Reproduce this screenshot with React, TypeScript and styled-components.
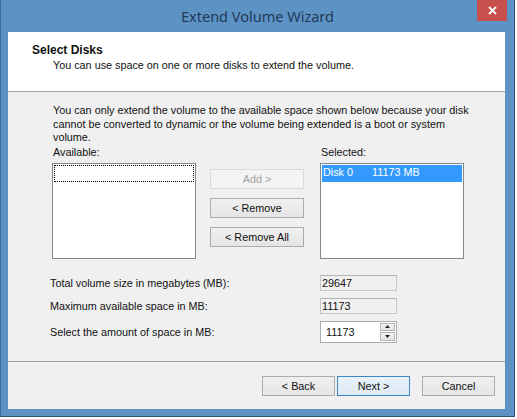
import React from "react";
import styled, { createGlobalStyle } from "styled-components";

const Global = createGlobalStyle`
  html, body { margin: 0; padding: 0; background: #ffffff; }
  body { font-family: "Liberation Sans", Arial, sans-serif; font-size: 10.8px; color: #111; }
  * { box-sizing: border-box; }
`;

const Window = styled.div`
  width: 515px;
  height: 417px;
  background: #5d92c5;
  border-left: 1px solid #3d6a93;
  border-right: 1px solid #2d4f70;
  border-bottom: 1px solid #2d4f70;
  padding: 0 9px 7px 7px;
  display: flex;
  flex-direction: column;
`;

const TitleBar = styled.div`
  height: 32px;
  display: grid;
  grid-template-columns: 1fr auto 1fr;
  margin-right: -2px;
`;

const Title = styled.div`
  grid-column: 2;
  font-family: "Segoe UI", "Noto Sans", "Open Sans", sans-serif;
  font-size: 14.5px;
  color: #1f3a57;
  line-height: 32px;
`;

const CloseBtn = styled.div`
  grid-column: 3;
  justify-self: end;
  width: 30px;
  height: 21px;
  background: #c7504c;
  display: flex;
  align-items: center;
  justify-content: center;
`;

const Client = styled.div`
  flex: 1;
  display: flex;
  flex-direction: column;
  background: #f0f0f0;
`;

const Header = styled.div`
  height: 60px;
  background: #ffffff;
  border-bottom: 1px solid #a0a0a0;
  padding: 11px 0 0 24px;
`;

const HeaderTitle = styled.div`
  font-weight: bold;
  font-size: 12px;
  line-height: 15px;
`;

const HeaderSub = styled.div`
  padding-left: 21px;
  line-height: 15px;
`;

const Body = styled.div`
  flex: 1;
  padding: 12px 0 0 42px;
  display: flex;
  flex-direction: column;
  border-bottom: 1px solid #a0a0a0;
`;

const Paragraph = styled.div`
  padding-left: 3px;
  line-height: 13.5px;
`;

const ListsRow = styled.div`
  display: flex;
  padding-left: 2px;
`;

const Column = styled.div<{ $w: number; $ml?: number }>`
  width: ${(p) => p.$w}px;
  margin-left: ${(p) => p.$ml ?? 0}px;
  display: flex;
  flex-direction: column;
`;

const ListLabel = styled.div`
  line-height: 14px;
  margin-bottom: 4px;
  padding-left: 1px;
`;

const ListBox = styled.div`
  height: 96px;
  background: #ffffff;
  border: 1px solid #828790;
  padding: 1px;
`;

const FocusRow = styled.div`
  height: 17px;
  border: 1px dotted #000;
`;

const SelRow = styled.div`
  height: 17px;
  background: #3399ff;
  color: #fff;
  display: flex;
  line-height: 15px;
  padding-left: 1px;
`;

const SelCell = styled.span<{ $w?: number }>`
  width: ${(p) => (p.$w ? `${p.$w}px` : "auto")};
`;

const ButtonStack = styled.div`
  display: flex;
  flex-direction: column;
  gap: 9px;
  padding-top: 24px;
`;

const Button = styled.div<{ $disabled?: boolean; $default?: boolean; $w?: number; $ml?: number }>`
  height: 20px;
  width: ${(p) => (p.$w ? `${p.$w}px` : "auto")};
  margin-left: ${(p) => p.$ml ?? 0}px;
  display: flex;
  align-items: center;
  justify-content: center;
  border: 1px solid ${(p) => (p.$disabled ? "#d9d9d9" : p.$default ? "#3c86c9" : "#acacac")};
  background: ${(p) =>
    p.$disabled ? "#f4f4f4" : p.$default ? "linear-gradient(#eaf2fa, #dde9f5)" : "linear-gradient(#f0f0f0, #e5e5e5)"};
  color: ${(p) => (p.$disabled ? "#a3a3a3" : "#111")};
`;

const Fields = styled.div`
  display: grid;
  grid-template-columns: 270px 77px;
  grid-template-rows: 16px 16px 22px;
  row-gap: 7px;
  align-items: center;
  margin-top: 16px;
`;

const FieldLabel = styled.div`
  line-height: 14px;
`;

const ReadOnlyBox = styled.div`
  height: 16px;
  background: #f0f0f0;
  border: 1px solid #c8c8c8;
  border-top-color: #b4b4b4;
  line-height: 14px;
  padding-left: 1px;
`;

const Spinner = styled.div`
  height: 22px;
  background: #fff;
  border: 1px solid #abadb3;
  display: flex;
  align-items: stretch;
  padding: 1px 1px 1px 5px;
`;

const SpinValue = styled.div`
  flex: 1;
  line-height: 18px;
`;

const SpinButtons = styled.div`
  width: 15px;
  display: flex;
  flex-direction: column;
  gap: 1px;
`;

const SpinBtn = styled.div`
  flex: 1;
  border: 1px solid #b5b5b5;
  background: linear-gradient(#f3f3f3, #e3e3e3);
  display: flex;
  align-items: center;
  justify-content: center;
`;

const Footer = styled.div`
  height: 47px;
  display: flex;
  justify-content: flex-end;
  align-items: flex-start;
  padding: 14px 10px 0 0;
`;

const Arrow = ({ down }: { down?: boolean }) => (
  <svg width="5" height="3" viewBox="0 0 5 3">
    <polygon points={down ? "0,0 5,0 2.5,3" : "0,3 5,3 2.5,0"} fill="#222" />
  </svg>
);

export default function App() {
  return (
    <>
      <Global />
      <Window>
        <TitleBar>
          <Title>Extend Volume Wizard</Title>
          <CloseBtn>
            <svg width="9" height="9" viewBox="0 0 9 9">
              <path d="M1 1 L8 8 M8 1 L1 8" stroke="#fff" strokeWidth="1.8" />
            </svg>
          </CloseBtn>
        </TitleBar>
        <Client>
          <Header>
            <HeaderTitle>Select Disks</HeaderTitle>
            <HeaderSub>You can use space on one or more disks to extend the volume.</HeaderSub>
          </Header>
          <Body>
            <Paragraph>
              You can only extend the volume to the available space shown below because your disk
              <br />
              cannot be converted to dynamic or the volume being extended is a boot or system
              <br />
              volume.
            </Paragraph>
            <ListsRow>
              <Column $w={144}>
                <ListLabel>Available:</ListLabel>
                <ListBox>
                  <FocusRow />
                </ListBox>
              </Column>
              <Column $w={94} $ml={14}>
                <ButtonStack>
                  <Button $disabled>Add &gt;</Button>
                  <Button>&lt; Remove</Button>
                  <Button>&lt; Remove All</Button>
                </ButtonStack>
              </Column>
              <Column $w={144} $ml={16}>
                <ListLabel>Selected:</ListLabel>
                <ListBox>
                  <SelRow>
                    <SelCell $w={49}>Disk 0</SelCell>
                    <SelCell>11173 MB</SelCell>
                  </SelRow>
                </ListBox>
              </Column>
            </ListsRow>
            <Fields>
              <FieldLabel>Total volume size in megabytes (MB):</FieldLabel>
              <ReadOnlyBox>29647</ReadOnlyBox>
              <FieldLabel>Maximum available space in MB:</FieldLabel>
              <ReadOnlyBox>11173</ReadOnlyBox>
              <FieldLabel>Select the amount of space in MB:</FieldLabel>
              <Spinner>
                <SpinValue>11173</SpinValue>
                <SpinButtons>
                  <SpinBtn>
                    <Arrow />
                  </SpinBtn>
                  <SpinBtn>
                    <Arrow down />
                  </SpinBtn>
                </SpinButtons>
              </Spinner>
            </Fields>
          </Body>
          <Footer>
            <Button $w={73}>&lt; Back</Button>
            <Button $w={73} $ml={2} $default>Next &gt;</Button>
            <Button $w={73} $ml={12}>Cancel</Button>
          </Footer>
        </Client>
      </Window>
    </>
  );
}
